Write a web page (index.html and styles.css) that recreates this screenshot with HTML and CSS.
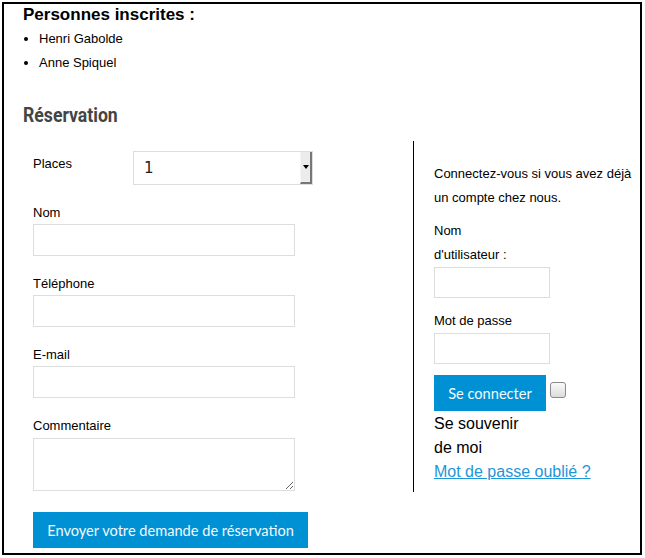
FILE: index.html
```html
<!DOCTYPE html>
<html lang="fr">
<head>
<meta charset="utf-8">
<title>Réservation</title>
<link rel="stylesheet" href="styles.css">
</head>
<body>
<div class="page">
  <h3 class="inscrits-title">Personnes inscrites :</h3>
  <ul class="inscrits">
    <li>Henri Gabolde</li>
    <li>Anne Spiquel</li>
  </ul>
  <h2 class="resa-title"><span>Réservation</span></h2>
  <div class="resa">
    <form class="resa-form">
      <div class="row-places">
        <label class="lbl lbl-places">Places</label>
        <div class="select">
          <select class="select-native"><option>1</option></select>
          <span class="select-btn"><svg width="6" height="4" viewBox="0 0 6 4"><path d="M0 0H6L3 4Z" fill="#000"/></svg></span>
        </div>
      </div>
      <div class="field"><label class="lbl">Nom</label><input class="inp" type="text"></div>
      <div class="field"><label class="lbl">Téléphone</label><input class="inp" type="text"></div>
      <div class="field"><label class="lbl">E-mail</label><input class="inp" type="text"></div>
      <div class="field"><label class="lbl">Commentaire</label><textarea class="inp txt"></textarea></div>
      <button type="button" class="btn btn-send">Envoyer votre demande de réservation</button>
    </form>
    <div class="login">
      <p class="login-intro">Connectez-vous si vous avez déjà un compte chez nous.</p>
      <label class="login-lbl">Nom d'utilisateur :</label>
      <input class="login-inp" type="text">
      <label class="login-lbl login-lbl-pass">Mot de passe</label>
      <input class="login-inp" type="password">
      <div class="login-actions">
        <button type="button" class="btn btn-login">Se connecter</button>
        <input class="chk" type="checkbox">
      </div>
      <div class="remember">Se souvenir de moi</div>
      <a class="forgot" href="#">Mot de passe oublié ?</a>
    </div>
  </div>
</div>
</body>
</html>
```
FILE: styles.css
```css
html, body {
  margin: 0;
  padding: 0;
  background: #fff;
}
body {
  font-family: "Liberation Sans", Arial, sans-serif;
  color: #000;
}
.page {
  margin: 2px;
  width: 640px;
  box-sizing: border-box;
  border: 2px solid #000;
  padding: 1px 0 5px 19px;
}
.inscrits-title {
  margin: 0;
  font-size: 17px;
  line-height: 20px;
  font-weight: bold;
}
.inscrits {
  margin: 2px 0 0;
  padding-left: 16px;
  font-size: 13px;
  line-height: 24px;
}
.resa-title {
  margin: 27px 0 13px;
  font-family: Roboto, sans-serif;
  font-weight: 700;
  font-size: 21px;
  line-height: 26px;
  color: #444;
}
.resa-title span {
  display: inline-block;
  transform: scaleX(0.84);
  transform-origin: left center;
}
.resa {
  display: flex;
  align-items: flex-start;
}
.resa-form {
  width: 390px;
  box-sizing: border-box;
  padding: 10px 0 0 10px;
  margin: 0;
}
.lbl {
  display: block;
  font-size: 13px;
  line-height: 21px;
}
.row-places {
  display: flex;
  align-items: flex-start;
}
.lbl-places {
  width: 100px;
  margin-top: 2px;
}
.select {
  position: relative;
  width: 180px;
  height: 34px;
}
.select-native {
  appearance: none;
  -webkit-appearance: none;
  width: 100%;
  height: 100%;
  box-sizing: border-box;
  border: 1px solid #ddd;
  border-radius: 0;
  background: #fff;
  padding: 0 0 0 10px;
  font-family: "DejaVu Sans", sans-serif;
  font-size: 15px;
  color: #222;
  margin: 0;
}
.select-btn {
  position: absolute;
  right: 1px;
  top: 1px;
  width: 12px;
  height: 32px;
  box-sizing: border-box;
  background: #ececec;
  border-right: 2px solid #777;
  border-bottom: 2px solid #777;
  border-left: 1px solid #f6f6f6;
  display: flex;
  align-items: center;
  justify-content: center;
}
.field {
  margin-top: 17px;
}
.inp {
  display: block;
  width: 262px;
  height: 32px;
  box-sizing: border-box;
  margin: 1px 0 0;
  border: 1px solid #ddd;
  border-radius: 0;
  background: #fff;
  padding: 0 6px;
}
.txt {
  height: 53px;
  margin-top: 2px;
  resize: both;
}
.btn {
  border: 0;
  border-radius: 0;
  background: #0091d5;
  color: #f4f9fc;
  font-family: Lato, "Open Sans", sans-serif;
  font-size: 14.6px;
  height: 36px;
  padding: 0;
  white-space: nowrap;
  text-align: center;
  cursor: pointer;
}
.btn-send {
  display: block;
  margin-top: 21px;
  width: 275px;
}
.login {
  border-left: 1px solid #000;
  padding: 21px 0 8px 20px;
  flex: 1;
  min-width: 0;
}
.login-intro {
  margin: 0 0 9px;
  font-size: 13px;
  line-height: 24px;
}
.login-lbl {
  display: block;
  width: 90px;
  font-size: 13px;
  line-height: 24px;
}
.login-lbl-pass {
  margin-top: 11px;
}
.login-inp {
  display: block;
  width: 116px;
  height: 31px;
  box-sizing: border-box;
  margin: 0;
  border: 1px solid #ddd;
  border-radius: 0;
  background: #fff;
}
.login-actions {
  display: flex;
  align-items: flex-start;
  margin-top: 11px;
}
.btn-login {
  width: 112px;
}
.chk {
  appearance: none;
  -webkit-appearance: none;
  width: 16px;
  height: 16px;
  margin: 7px 0 0 4px;
  border: 1px solid #8a8a8a;
  border-radius: 3px;
  background: linear-gradient(#fafafa, #dcdcdc);
  box-sizing: border-box;
}
.remember {
  width: 90px;
  font-size: 16px;
  line-height: 24px;
  margin-top: 1px;
}
.forgot {
  display: block;
  font-size: 16px;
  line-height: 24px;
  color: #1e96d8;
  text-decoration: underline;
}
```
